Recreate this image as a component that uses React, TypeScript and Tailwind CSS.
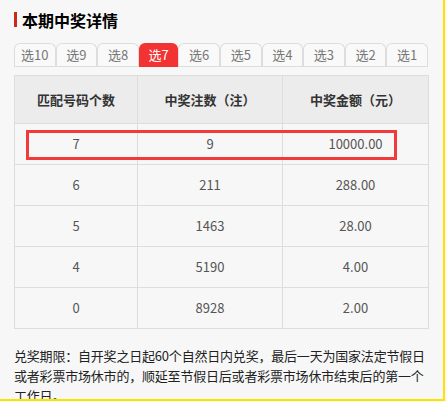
import React from "react";

const tabs = ["选10", "选9", "选8", "选7", "选6", "选5", "选4", "选3", "选2", "选1"];

const rows = [
  { match: "7", count: "9", amount: "10000.00" },
  { match: "6", count: "211", amount: "288.00" },
  { match: "5", count: "1463", amount: "28.00" },
  { match: "4", count: "5190", amount: "4.00" },
  { match: "0", count: "8928", amount: "2.00" },
];

export default function App() {
  const active = "选7";

  return (
    <div className="w-[447px] h-[402px] bg-[#f8f8f8]">
      <div
        className="w-[445px] h-[401px] border-r-2 border-b-2 border-[#ffe100] bg-[#f7f7f7] pl-[14px] pt-[11px] overflow-hidden"
        style={{ fontFamily: '"Noto Sans CJK SC", "Noto Sans", sans-serif' }}
      >
        <div className="flex items-center gap-[5px] h-[17px]">
          <span className="w-[3px] h-[15px] bg-[#cc2a15]" />
          <h2 className="text-[16px] font-bold leading-none text-black">本期中奖详情</h2>
        </div>

        <div className="mt-[15px] w-[414px] flex items-end h-[24px] border-b border-[#dddddd]">
          {tabs.map(t => (
            <div
              key={t}
              className={
                t === active
                  ? "flex-1 h-[24px] -mb-px rounded-t-[6px] bg-[#f13333] text-white text-[13px] flex items-center justify-center"
                  : "flex-1 h-[23px] rounded-t-[6px] border border-b-0 border-[#dddddd] bg-[#f9f9f9] text-[#777] text-[13px] flex items-center justify-center"
              }
            >
              {t}
            </div>
          ))}
        </div>

        <div className="relative mt-[8px] w-[414px]">
          <table className="w-[414px] border-collapse table-fixed text-[13px]">
            <colgroup>
              <col className="w-[123px]" />
              <col className="w-[145px]" />
              <col className="w-[146px]" />
            </colgroup>
            <thead>
              <tr className="h-[48px] bg-[#ececec]">
                <th className="border border-[#dddddd] font-bold text-[#333]">匹配号码个数</th>
                <th className="border border-[#dddddd] font-bold text-[#333]">中奖注数（注）</th>
                <th className="border border-[#dddddd] font-bold text-[#333]">中奖金额（元）</th>
              </tr>
            </thead>
            <tbody>
              {rows.map(r => (
                <tr key={r.match} className="h-[41px] text-[#555]">
                  <td className="border border-[#dddddd] text-center">{r.match}</td>
                  <td className="border border-[#dddddd] text-center">{r.count}</td>
                  <td className="border border-[#dddddd] text-center">{r.amount}</td>
                </tr>
              ))}
            </tbody>
          </table>
          <div className="absolute left-[12px] top-[55px] w-[371px] h-[30px] border-[3px] border-[#f33a3a]" />
        </div>

        <p className="mt-[17px] whitespace-nowrap tracking-[-0.2px] text-[13px] leading-[20px] text-[#222]">
          兑奖期限：自开奖之日起60个自然日内兑奖，最后一天为国家法定节假日<br />
          或者彩票市场休市的，顺延至节假日后或者彩票市场休市结束后的第一个<br />
          工作日。
        </p>
      </div>
    </div>
  );
}
